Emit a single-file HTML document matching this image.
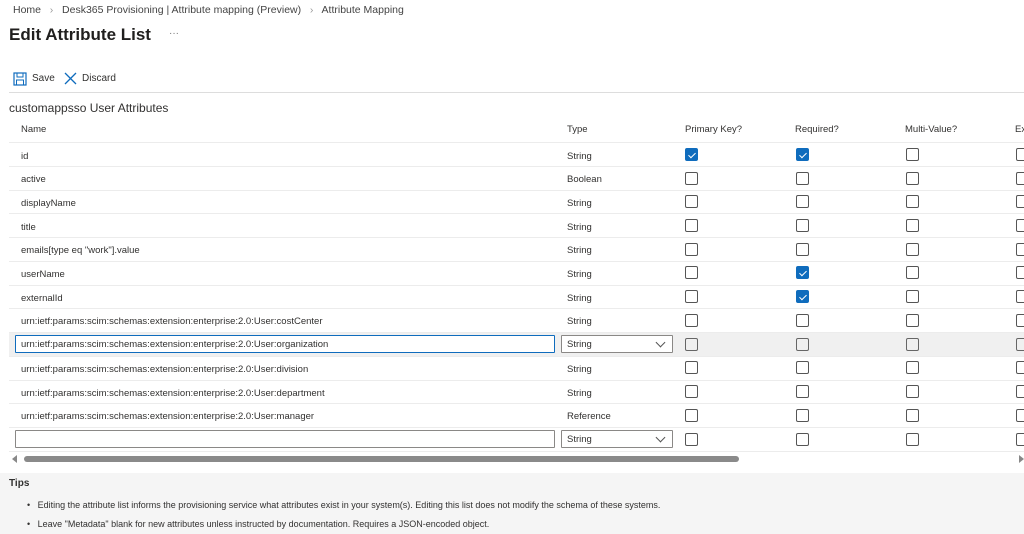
<!DOCTYPE html>
<html><head><style>
*{margin:0;padding:0;box-sizing:border-box}
body{width:1024px;height:534px;overflow:hidden;background:#fff;font-family:"Liberation Sans",Arial,sans-serif;color:#323130;position:relative}
.a{position:absolute;white-space:nowrap}
.t{font-size:9.5px;color:#323130}
.cb{position:absolute;width:13px;height:13px;border:1px solid #555;border-radius:2px;background:#fff}
.cb.on{background:#0f6cbd;border-color:#0f6cbd}
.cb.on:after{content:"";position:absolute;left:3.5px;top:1.5px;width:3px;height:6px;border:solid #fff;border-width:0 1px 1px 0;transform:rotate(45deg)}
.cb.dis{border-color:#666;background:#f0f0f0}
.line{position:absolute;left:9px;right:0;height:1px;background:#ececec}
.inp{position:absolute;left:15px;width:540px;height:18px;border:1px solid #8a8886;background:#fff;font-size:9.5px;padding:3px 5px;border-radius:1px}
.sel{position:absolute;left:561px;width:112px;height:18px;border:1px solid #8a8886;background:#fff;font-size:9.5px;padding:3px 5px;border-radius:1px}
.sel:after{content:"";position:absolute;right:8px;top:3px;width:6px;height:6px;border:solid #555;border-width:0 1px 1px 0;transform:rotate(45deg)}
#rows .t{margin-top:2px}
</style></head><body>
<div class="a" style="left:13px;top:4px;font-size:10.5px;color:#444">Home &nbsp;&nbsp;<span style="color:#999">›</span>&nbsp;&nbsp; Desk365 Provisioning | Attribute mapping (Preview) &nbsp;&nbsp;<span style="color:#999">›</span>&nbsp;&nbsp; Attribute Mapping</div>
<div class="a" style="left:9px;top:25px;font-size:17px;font-weight:bold;color:#201f1e">Edit Attribute List</div>
<div class="a" style="left:169px;top:28px;font-size:10px;color:#777">···</div>
<svg class="a" style="left:13px;top:72px" width="14" height="14" viewBox="0 0 14 14"><rect x="1" y="1" width="12" height="12" fill="none" stroke="#0f6cbd" stroke-width="1.2"/><rect x="4" y="1" width="6" height="4" fill="none" stroke="#0f6cbd"/><rect x="3.5" y="8" width="7" height="5" fill="none" stroke="#0f6cbd"/></svg>
<div class="a" style="left:32px;top:73px;font-size:10px">Save</div>
<svg class="a" style="left:64px;top:72px" width="13" height="13" viewBox="0 0 13 13"><path d="M1 1L12 12M12 1L1 12" stroke="#0f6cbd" stroke-width="1.3"/></svg>
<div class="a" style="left:82px;top:73px;font-size:10px">Discard</div>
<div style="position:absolute;left:9px;right:0;top:92px;height:1px;background:#ddd"></div>
<div class="a" style="left:9px;top:101px;font-size:12px">customappsso User Attributes</div>
<div class="a t" style="left:21px;top:124px">Name</div>
<div class="a t" style="left:567px;top:124px">Type</div>
<div class="a t" style="left:685px;top:124px">Primary Key?</div>
<div class="a t" style="left:795px;top:124px">Required?</div>
<div class="a t" style="left:905px;top:124px">Multi-Value?</div>
<div class="a t" style="left:1015px;top:124px">Ex</div>
<div style="position:absolute;left:9px;right:0;top:332px;height:24px;background:#f0f0f0"></div>
<div class="line" style="top:142px"></div><div class="line" style="top:166px"></div><div class="line" style="top:190px"></div><div class="line" style="top:213px"></div><div class="line" style="top:237px"></div><div class="line" style="top:261px"></div><div class="line" style="top:285px"></div><div class="line" style="top:308px"></div><div class="line" style="top:332px"></div><div class="line" style="top:356px"></div><div class="line" style="top:380px"></div><div class="line" style="top:403px"></div><div class="line" style="top:427px"></div><div class="line" style="top:451px"></div>
<div id="rows">
<div class="a t" style="left:21px;top:149px">id</div><div class="a t" style="left:567px;top:149px">String</div>
<div class="a t" style="left:21px;top:172px">active</div><div class="a t" style="left:567px;top:172px">Boolean</div>
<div class="a t" style="left:21px;top:196px">displayName</div><div class="a t" style="left:567px;top:196px">String</div>
<div class="a t" style="left:21px;top:220px">title</div><div class="a t" style="left:567px;top:220px">String</div>
<div class="a t" style="left:21px;top:243px">emails[type eq "work"].value</div><div class="a t" style="left:567px;top:243px">String</div>
<div class="a t" style="left:21px;top:267px">userName</div><div class="a t" style="left:567px;top:267px">String</div>
<div class="a t" style="left:21px;top:291px">externalId</div><div class="a t" style="left:567px;top:291px">String</div>
<div class="a t" style="left:21px;top:314px">urn:ietf:params:scim:schemas:extension:enterprise:2.0:User:costCenter</div><div class="a t" style="left:567px;top:314px">String</div>
<div class="a t" style="left:21px;top:362px">urn:ietf:params:scim:schemas:extension:enterprise:2.0:User:division</div><div class="a t" style="left:567px;top:362px">String</div>
<div class="a t" style="left:21px;top:386px">urn:ietf:params:scim:schemas:extension:enterprise:2.0:User:department</div><div class="a t" style="left:567px;top:386px">String</div>
<div class="a t" style="left:21px;top:409px">urn:ietf:params:scim:schemas:extension:enterprise:2.0:User:manager</div><div class="a t" style="left:567px;top:409px">Reference</div>
</div>
<div class="inp" style="top:335px;border-color:#0f6cbd">urn:ietf:params:scim:schemas:extension:enterprise:2.0:User:organization</div><div class="sel" style="top:335px">String</div>
<div class="inp" style="top:430px"></div><div class="sel" style="top:430px">String</div>

<div id="cbs"></div>
<script>
var ys=[148,172,195,219,243,266,290,314,338,361,385,409,433];
var on={"0-0":1,"0-1":1,"5-1":1,"6-1":1};
var xs=[685,796,906,1016];var h="";
ys.forEach(function(y,i){xs.forEach(function(x,j){var c="cb";if(on[i+"-"+j])c+=" on";else if(i==8)c+=" dis";h+='<div class="'+c+'" style="left:'+x+'px;top:'+y+'px"></div>';});});
document.getElementById("cbs").innerHTML=h;
</script>
<div class="a" style="left:12px;top:455px;width:0;height:0;border-top:4px solid transparent;border-bottom:4px solid transparent;border-right:5px solid #888"></div>
<div class="a" style="left:24px;top:456px;width:715px;height:6px;background:#8a8a8a;border-radius:3px"></div>
<div class="a" style="left:1019px;top:455px;width:0;height:0;border-top:4px solid transparent;border-bottom:4px solid transparent;border-left:5px solid #888"></div>
<div style="position:absolute;left:0;right:0;top:473px;bottom:0;background:#f5f5f5"></div>
<div class="a" style="left:9px;top:478px;font-size:10px;font-weight:bold">Tips</div>
<div class="a" style="left:27px;top:500px;font-size:9px">•&nbsp;&nbsp; Editing the attribute list informs the provisioning service what attributes exist in your system(s). Editing this list does not modify the schema of these systems.</div>
<div class="a" style="left:27px;top:519px;font-size:9px">•&nbsp;&nbsp; Leave "Metadata" blank for new attributes unless instructed by documentation. Requires a JSON-encoded object.</div>
</body></html>
